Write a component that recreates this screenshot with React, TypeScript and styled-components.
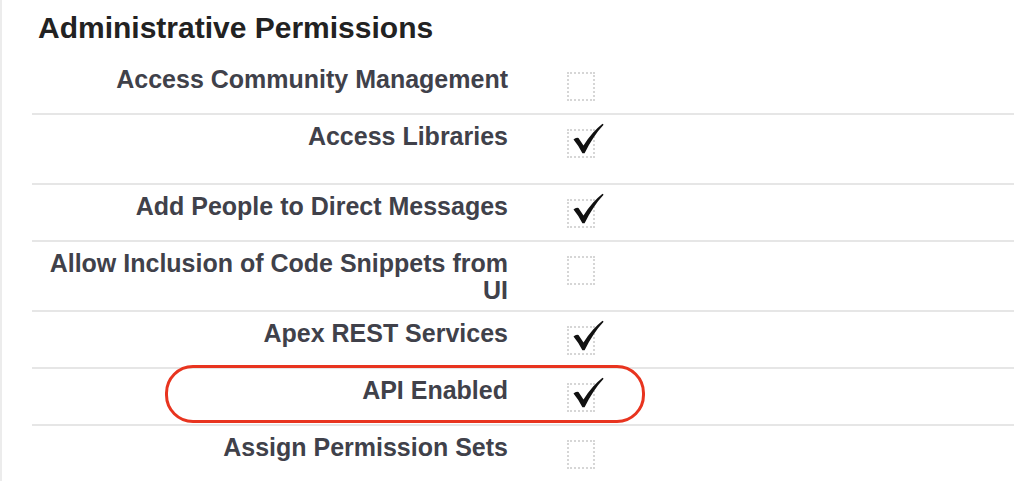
import styled, { createGlobalStyle } from 'styled-components'

const GlobalStyle = createGlobalStyle`
    html, body {
        margin: 0;
        padding: 0;
        background: #ffffff;
    }
    body {
        font-family: "Liberation Sans", Arial, Helvetica, sans-serif;
    }
`

interface Permission {
    label: string
    enabled: boolean
    tall?: boolean
    highlighted?: boolean
}

const permissions: Permission[] = [
    { label: 'Access Community Management', enabled: false },
    { label: 'Access Libraries', enabled: true, tall: true },
    { label: 'Add People to Direct Messages', enabled: true },
    { label: 'Allow Inclusion of Code Snippets from UI', enabled: false },
    { label: 'Apex REST Services', enabled: true },
    { label: 'API Enabled', enabled: true, highlighted: true },
    { label: 'Assign Permission Sets', enabled: false },
]

function CheckMark() {
    return (
        <CheckSvg viewBox="0 0 32 32" aria-hidden="true">
            <path d="M1.5 16.5 Q4 14 6.5 15 L11.5 22.5 Q20 9 30.5 0.8 L31.6 1.8 Q21.5 12.5 12.6 30.2 L10.4 30.2 Q6.5 22.5 1.5 16.5 Z" />
        </CheckSvg>
    )
}

function PermissionRow({ permission, first }: { permission: Permission, first: boolean }) {
    return (
        <Row $tall={permission.tall} $first={first}>
            <Label>{permission.label}</Label>
            <Box>
                {permission.enabled && <CheckMark />}
            </Box>
            {permission.highlighted && <Highlight />}
        </Row>
    )
}

export default function App() {
    return (
        <>
            <GlobalStyle />
            <Section>
                <Title>Administrative Permissions</Title>
                {permissions.map((p, i) => (
                    <PermissionRow key={p.label} permission={p} first={i === 0} />
                ))}
            </Section>
        </>
    )
}

const Section = styled.section`
    width: 1012px;
    border-left: 2px solid #ececec;
    padding-top: 10px;
`

const Title = styled.h2`
    margin: 0 0 10px 36px;
    font-size: 30px;
    line-height: 36px;
    font-weight: bold;
    color: #222222;
`

const Row = styled.div<{ $tall?: boolean, $first?: boolean }>`
    position: relative;
    box-sizing: border-box;
    display: grid;
    grid-template-columns: 476px 1fr;
    column-gap: 59px;
    align-items: start;
    margin-left: 30px;
    min-height: ${p => p.$tall ? 70 : 57}px;
    padding: 8px 0 6px;
    border-top: 2px solid ${p => p.$first ? 'transparent' : '#e6e6e6'};
`

const Label = styled.div`
    text-align: right;
    font-size: 25px;
    line-height: 27px;
    font-weight: bold;
    color: #40414a;
`

const Box = styled.div`
    position: relative;
    box-sizing: border-box;
    width: 28px;
    height: 29px;
    margin-top: 6px;
    border: 2px dotted #d6d6d6;
`

const CheckSvg = styled.svg`
    position: absolute;
    left: 3px;
    top: -8px;
    width: 32px;
    height: 32px;
    fill: #111111;
`

const Highlight = styled.div`
    position: absolute;
    left: 133px;
    top: -4px;
    width: 480px;
    height: 58px;
    box-sizing: border-box;
    border: 3px solid #e8341f;
    border-radius: 28px;
    pointer-events: none;
`
